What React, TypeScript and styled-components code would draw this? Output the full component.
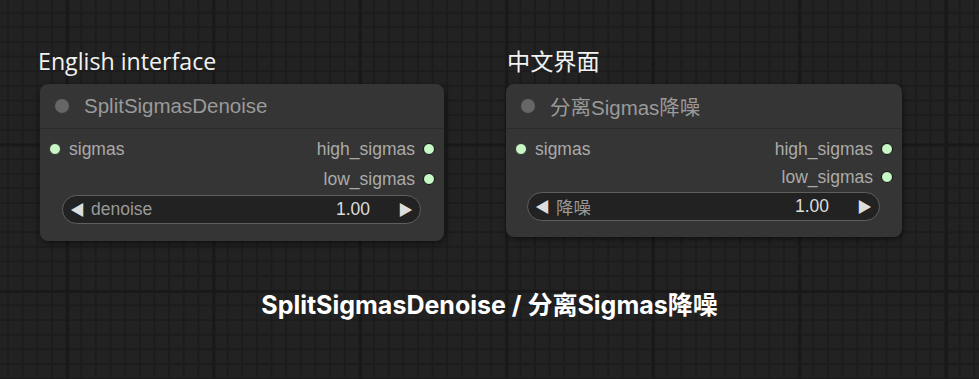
import styled, { createGlobalStyle } from 'styled-components'

const GlobalStyle = createGlobalStyle`
    html, body {
        margin: 0;
        padding: 0;
        width: 979px;
        height: 379px;
        overflow: hidden;
        background: #222222;
    }
    #root {
        width: 979px;
        height: 379px;
    }
`

const Canvas = styled.div`
    width: 979px;
    height: 379px;
    box-sizing: border-box;
    padding-top: 45px;
    background-color: #222222;
    background-image:
        linear-gradient(to right, #191919 0 3px, transparent 3px),
        linear-gradient(to bottom, #191919 0 3px, transparent 3px),
        linear-gradient(to right, #1c1c1c 0 2px, transparent 2px),
        linear-gradient(to bottom, #1c1c1c 0 2px, transparent 2px);
    background-size: 146.5px 146.5px, 146.5px 146.5px, 14.65px 14.65px, 14.65px 14.65px;
    background-position: 66px 0, 0 -3px, 7px 0, 0 -3px;
    font-family: "Liberation Sans", Arial, "Noto Sans CJK SC", sans-serif;
`

const Columns = styled.div`
    display: flex;
    align-items: flex-start;
`

const Column = styled.div<{ $left: number; $width: number }>`
    margin-left: ${p => p.$left}px;
    width: ${p => p.$width}px;
    display: flex;
    flex-direction: column;
`

const Heading = styled.div<{ $shift: number }>`
    margin-left: ${p => p.$shift}px;
    height: 32px;
    line-height: 32px;
    font-family: "Open Sans", "Noto Sans CJK SC", sans-serif;
    font-size: 23.2px;
    color: #f2f2f2;
    margin-bottom: 7px;
`

const Node = styled.div<{ $bottom: number }>`
    background: #353535;
    border-radius: 8px;
    box-shadow: 1px 2px 6px rgba(0, 0, 0, 0.55);
    padding-bottom: ${p => p.$bottom}px;
`

const Header = styled.div`
    height: 44px;
    display: flex;
    align-items: center;
    padding-left: 15px;
    gap: 15px;
    border-bottom: 1px solid #2b2b2b;
`

const StatusDot = styled.span`
    width: 14px;
    height: 14px;
    border-radius: 50%;
    background: #666666;
`

const Title = styled.span`
    font-size: 20.5px;
    color: #9a9a9a;
`

const Body = styled.div<{ $top: number }>`
    padding-top: ${p => p.$top}px;
`

const Row = styled.div<{ $h: number }>`
    height: ${p => p.$h}px;
    display: flex;
    align-items: center;
    padding: 0 9px;
    font-size: 17.5px;
    color: #aaaaaa;
`

const Slot = styled.span<{ $out?: boolean }>`
    width: 10px;
    height: 10px;
    border-radius: 50%;
    background: #c6f7c4;
    border: 1px solid ${p => (p.$out ? '#101010' : '#353535')};
    flex-shrink: 0;
`

const SlotLabel = styled.span<{ $out?: boolean }>`
    margin: ${p => (p.$out ? '0 8px 0 auto' : '0 0 0 8px')};
`

const Widget = styled.div<{ $mx: number; $mr: number }>`
    margin: 1px ${p => p.$mr}px 0 ${p => p.$mx}px;
    height: 27px;
    border: 1px solid #5f5f5f;
    border-radius: 15px;
    background: #222222;
    display: flex;
    align-items: center;
    padding: 0 7px 0 7px;
    font-size: 17.5px;
    color: #999999;
`

const Arrow = styled.span`
    color: #dddddd;
    font-size: 15px;
    line-height: 1;
`

const WidgetName = styled.span`
    margin-left: 6px;
    flex: 1;
`

const WidgetValue = styled.span`
    color: #dddddd;
    margin-right: 28px;
`

const Caption = styled.div`
    margin-top: 44px;
    text-align: center;
    font-family: Inter, "Noto Sans CJK SC", sans-serif;
    font-weight: 700;
    font-size: 25px;
    color: #ffffff;
`

type NodeProps = {
    title: string
    widget: string
    rowH: number
    top: number
    bottom: number
    mx: number
    mr: number
}

const NodeCard = ({ title, widget, rowH, top, bottom, mx, mr }: NodeProps) => (
    <Node $bottom={bottom}>
        <Header>
            <StatusDot />
            <Title>{title}</Title>
        </Header>
        <Body $top={top}>
            <Row $h={rowH}>
                <Slot />
                <SlotLabel>sigmas</SlotLabel>
                <SlotLabel $out>high_sigmas</SlotLabel>
                <Slot $out />
            </Row>
            <Row $h={rowH}>
                <SlotLabel $out>low_sigmas</SlotLabel>
                <Slot $out />
            </Row>
            <Widget $mx={mx} $mr={mr}>
                <Arrow>◀</Arrow>
                <WidgetName>{widget}</WidgetName>
                <WidgetValue>1.00</WidgetValue>
                <Arrow>▶</Arrow>
            </Widget>
        </Body>
    </Node>
)

const App = () => (
    <Canvas>
        <GlobalStyle />
        <Columns>
            <Column $left={40} $width={404}>
                <Heading $shift={-2}>English interface</Heading>
                <NodeCard title="SplitSigmasDenoise" widget="denoise" rowH={30} top={5} bottom={17} mx={22} mr={23} />
            </Column>
            <Column $left={62} $width={396}>
                <Heading $shift={1}>中文界面</Heading>
                <NodeCard title="分离Sigmas降噪" widget="降噪" rowH={28} top={6} bottom={16} mx={21} mr={22} />
            </Column>
        </Columns>
        <Caption>SplitSigmasDenoise / 分离Sigmas降噪</Caption>
    </Canvas>
)

export default App
